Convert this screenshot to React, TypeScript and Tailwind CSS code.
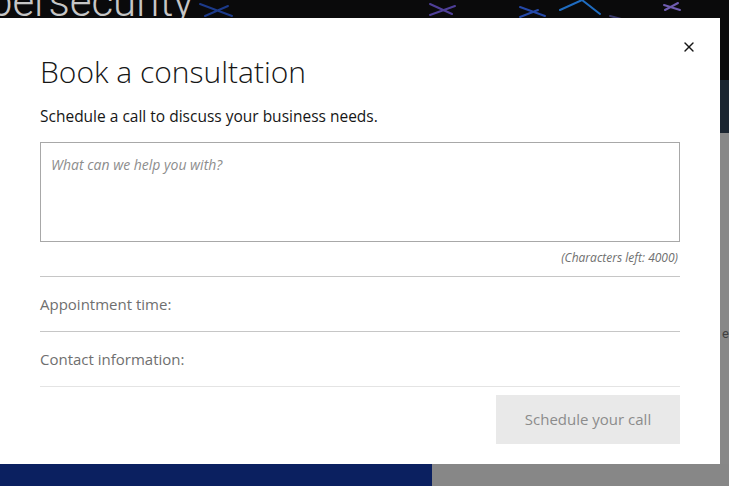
import { X } from "lucide-react";

const font = { fontFamily: "Roboto, 'Open Sans', sans-serif" };
const plex = { fontFamily: "'Open Sans', Roboto, sans-serif" };

function Backdrop() {
  return (
    <div className="flex h-[486px] w-[729px] flex-col overflow-hidden bg-[#888888]">
      <div className="relative h-[80px] shrink-0 overflow-hidden bg-[#0a0a0b]">
        <div
          className="-ml-[58px] -mt-[22px] whitespace-nowrap text-[42px] font-light leading-[48px] text-[#c6c6c6]"
          style={font}
        >
          Cybersecurity
        </div>
        <svg className="absolute left-0 top-0" width="729" height="20" viewBox="0 0 729 20">
          <g strokeWidth="2" fill="none" strokeLinecap="round">
            <path d="M200 4 L232 16 M205 16 L228 6" stroke="#1c3a8a" />
            <path d="M430 4 L452 14 M430 15 L455 6" stroke="#4e3f98" />
            <path d="M520 7 L545 16 M520 17 L538 10" stroke="#2448a8" />
            <path d="M560 10 L582 0 M582 0 L600 14" stroke="#1f6cc0" />
            <path d="M664 5 L680 10 M665 10 L678 3" stroke="#6f5cb0" />
            <path d="M610 16 L625 20" stroke="#3a3a6a" />
          </g>
        </svg>
      </div>
      <div className="h-[53px] shrink-0 bg-[#1b2530]" />
      <div className="flex flex-1 justify-end pt-[194px]">
        <span className="text-[13px] leading-none text-[#404040]" style={font}>
          e
        </span>
      </div>
      <div className="flex h-[22px] shrink-0">
        <div className="w-[432px] bg-[#0b2060]" />
        <div className="flex-1 bg-[#878787]" />
      </div>
    </div>
  );
}

export default function App() {
  return (
    <div className="relative h-[486px] w-[729px] overflow-hidden" style={font}>
      <Backdrop />
      <div className="absolute left-0 top-[18px] h-[446px] w-[720px] bg-white" style={plex}>
        <button
          type="button"
          className="absolute right-[23px] top-[21px] flex h-[16px] w-[16px] items-center justify-center text-[#161616]"
          aria-label="Close"
        >
          <X className="h-[16px] w-[16px]" strokeWidth={2} />
        </button>
        <div className="flex flex-col px-[40px] pt-[36px]">
          <h2 className="text-[30px] font-light leading-[36px] text-[#161616]">Book a consultation</h2>
          <p className="mt-[16px] text-[15.5px] leading-[20px] text-[#161616]">
            Schedule a call to discuss your business needs.
          </p>
          <div className="mt-[16px] h-[100px] w-[640px] border border-[#a8a8a8] px-[10px] py-[9px]">
            <span className="text-[14px] italic leading-[18px] text-[#8d8d8d]">What can we help you with?</span>
          </div>
          <div className="mt-[9px] pr-[2px] text-right text-[12px] italic leading-[14px] text-[#6f6f6f]">
            (Characters left: 4000)
          </div>
          <div className="mt-[11px] border-t border-[#c6c6c6]" />
          <div className="flex h-[54px] items-center text-[15px] text-[#6f6f6f]">Appointment time:</div>
          <div className="border-t border-[#c6c6c6]" />
          <div className="flex h-[54px] items-center text-[15px] text-[#6f6f6f]">Contact information:</div>
          <div className="border-t border-[#e4e4e4]" />
          <div className="mt-[8px] flex justify-end">
            <button
              type="button"
              className="flex h-[49px] w-[184px] items-center justify-center bg-[#e9e9e9] text-[15px] text-[#8c8c8c]"
            >
              Schedule your call
            </button>
          </div>
        </div>
      </div>
    </div>
  );
}
